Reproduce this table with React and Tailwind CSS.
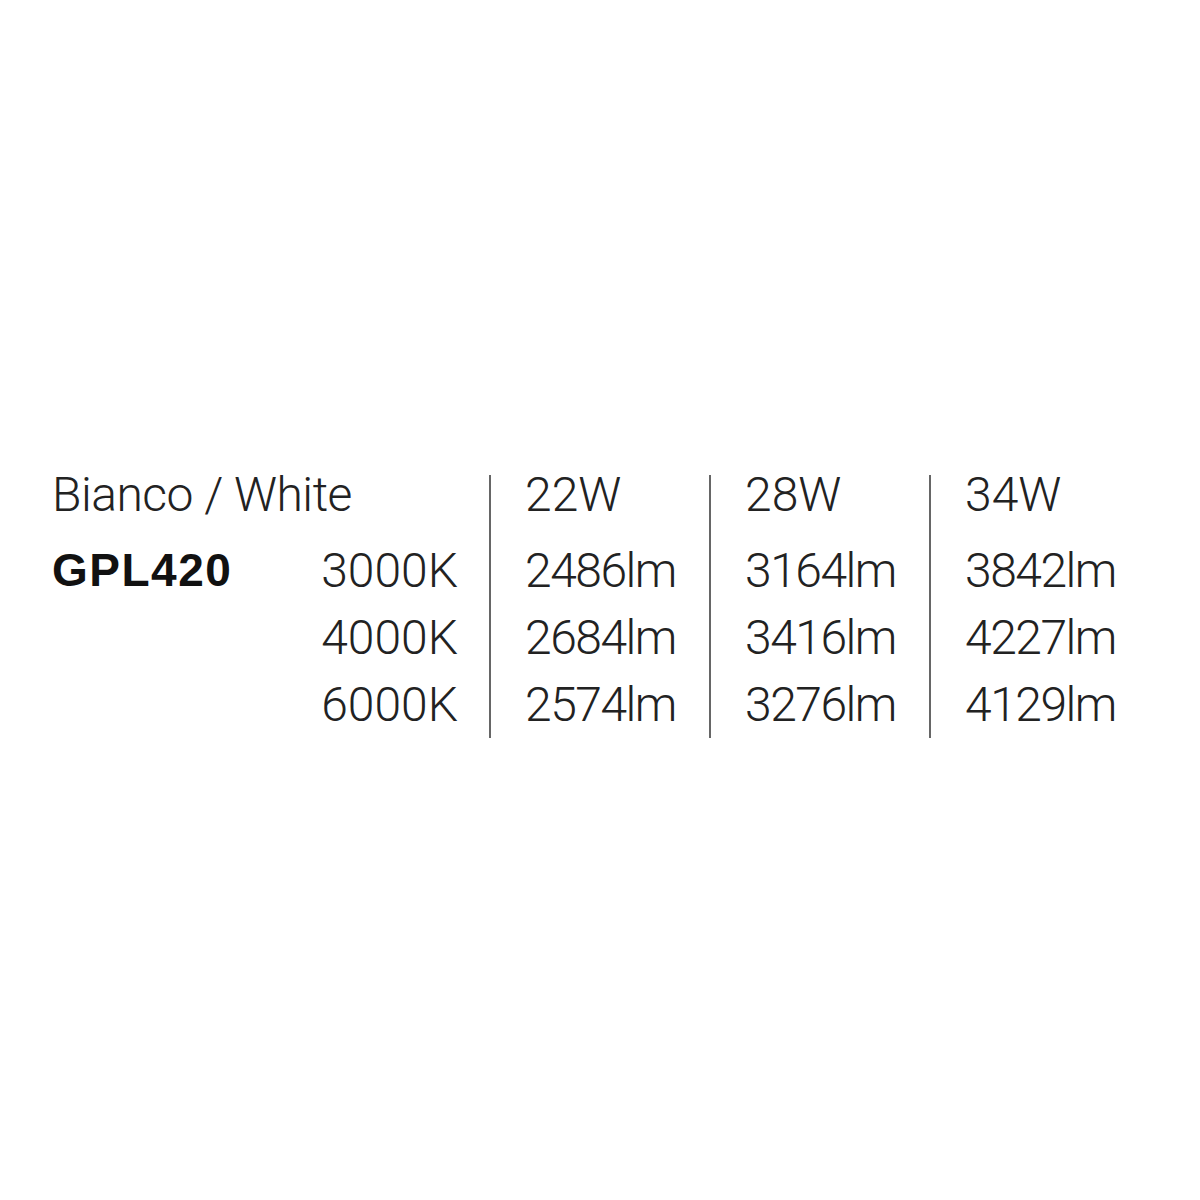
export default function App() {
  const cols = [
    { w: "22W", v: ["2486lm", "2684lm", "2574lm"] },
    { w: "28W", v: ["3164lm", "3416lm", "3276lm"] },
    { w: "34W", v: ["3842lm", "4227lm", "4129lm"] },
  ];
  return (
    <div
      className="w-[1200px] h-[1200px] bg-white pt-[475px] pl-[52px] text-[#222] text-[48px] font-light"
      style={{ fontFamily: 'Roboto, "Liberation Sans", Arial, sans-serif' }}
    >
      <div className="flex">
        <div className="w-[406px] flex flex-col">
          <div className="h-[40px] leading-[40px] whitespace-nowrap tracking-[-0.5px]">Bianco / White</div>
          <div className="mt-[22px] h-[67px] leading-[67px] flex justify-between">
            <span
              className="font-bold text-[#111] text-[46px] tracking-[1.5px]"
              style={{ fontFamily: '"Liberation Sans", Arial, sans-serif' }}
            >
              GPL420
            </span>
            <span>3000K</span>
          </div>
          <div className="h-[67px] leading-[67px] text-right">4000K</div>
          <div className="h-[67px] leading-[67px] text-right">6000K</div>
        </div>
        <div className="w-[31px]" />
        {cols.map((c) => (
          <div key={c.w} className="w-[220px] border-l-2 border-[#666] pl-[34px] flex flex-col">
            <div className="h-[40px] leading-[40px]">{c.w}</div>
            <div className="mt-[22px] h-[67px] leading-[67px] tracking-[-1.5px]">{c.v[0]}</div>
            <div className="h-[67px] leading-[67px] tracking-[-1.5px]">{c.v[1]}</div>
            <div className="h-[67px] leading-[67px] tracking-[-1.5px]">{c.v[2]}</div>
          </div>
        ))}
      </div>
    </div>
  );
}
